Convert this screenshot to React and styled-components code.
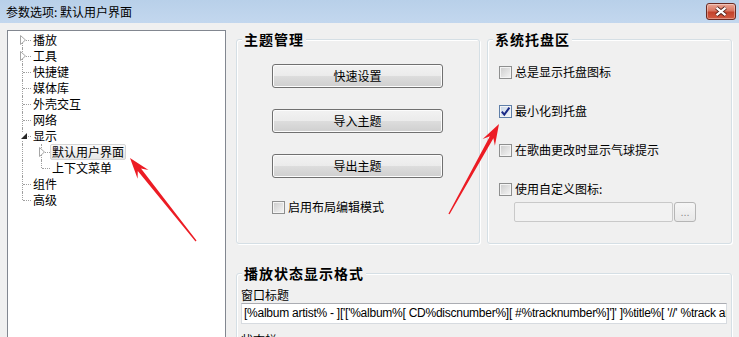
import React from "react";
import styled, { createGlobalStyle } from "styled-components";

const GlobalStyle = createGlobalStyle`
  html, body {
    margin: 0;
    padding: 0;
  }
  body {
    width: 739px;
    height: 337px;
    overflow: hidden;
    background: #f0f0f0;
    font-family: "Noto Sans CJK SC", "Liberation Sans", sans-serif;
    font-size: 12px;
    color: #000;
  }
`;

// Data
const treeItems = [
  { label: "播放", level: 0, toggle: "closed", up: false, down: true },
  { label: "工具", level: 0, toggle: "closed", up: true, down: true },
  { label: "快捷键", level: 0, up: true, down: true },
  { label: "媒体库", level: 0, up: true, down: true },
  { label: "外壳交互", level: 0, up: true, down: true },
  { label: "网络", level: 0, up: true, down: true },
  { label: "显示", level: 0, toggle: "open", up: true, down: true },
  { label: "默认用户界面", level: 1, toggle: "closed", up: true, down: true, selected: true },
  { label: "上下文菜单", level: 1, up: true, down: false },
  { label: "组件", level: 0, up: true, down: true },
  { label: "高级", level: 0, up: true, down: false },
];

const formatString =
  "[%album artist% - ]['['%album%[ CD%discnumber%][ #%tracknumber%]']' ]%title%[ '//' %track artist%]";

const arrowPoints = ([x1, y1], [x2, y2]) => {
  const dx = x2 - x1;
  const dy = y2 - y1;
  const len = Math.hypot(dx, dy);
  const ux = dx / len;
  const uy = dy / len;
  const nx = -uy;
  const ny = ux;
  const head = 21;
  const hw = 7;
  const sw = 2;
  const tw = 0.7;
  const bx = x2 - ux * head;
  const by = y2 - uy * head;
  const jx = x2 - ux * head * 0.72;
  const jy = y2 - uy * head * 0.72;
  const pts = [
    [x1 + nx * tw, y1 + ny * tw],
    [jx + nx * sw, jy + ny * sw],
    [bx + nx * hw, by + ny * hw],
    [x2, y2],
    [bx - nx * hw, by - ny * hw],
    [jx - nx * sw, jy - ny * sw],
    [x1 - nx * tw, y1 - ny * tw],
  ];
  return pts.map((p) => p.map((v) => v.toFixed(1)).join(",")).join(" ");
};

const Expander = ({ open }) =>
  open ? (
    <ExpanderIcon width="8" height="8" viewBox="0 0 8 8" style={{ top: 4 }}>
      <rect x="0" y="0" width="8" height="8" fill="#fff" />
      <polygon points="7,1 7,7 1,7" fill="#262626" />
    </ExpanderIcon>
  ) : (
    <ExpanderIcon width="7" height="10" viewBox="0 0 7 10" style={{ top: 3 }}>
      <polygon points="0.5,0.5 5.5,5 0.5,9.5" fill="#fff" stroke="#a6a6a6" />
    </ExpanderIcon>
  );

const TreeRow = ({ item }) => (
  <Row>
    {item.level > 0 && (
      <Cell>
        <VLine $up $down />
      </Cell>
    )}
    <Cell>
      <VLine $up={item.up} $down={item.down} />
      <HLine />
      {item.toggle && <Expander open={item.toggle === "open"} />}
    </Cell>
    <Label $selected={item.selected}>{item.label}</Label>
  </Row>
);

const Check = ({ checked, label }) => (
  <CheckRow>
    <Box $checked={checked}>
      {checked && (
        <svg width="11" height="11" viewBox="0 0 11 11">
          <path
            d="M1.8 5.6 L4.3 8.6 L9.4 1.6"
            fill="none"
            stroke="#1b2a86"
            strokeWidth="2"
          />
        </svg>
      )}
    </Box>
    <span>{label}</span>
  </CheckRow>
);

const App = () => {
  return (
    <Window>
      <GlobalStyle />
      <TitleBar>
        <Title>参数选项: 默认用户界面</Title>
        <CloseButton>
          <svg width="14" height="11" viewBox="0 0 14 11">
            <path d="M2.5 1.8 L11.5 9.2 M11.5 1.8 L2.5 9.2" stroke="#4a1c16" strokeWidth="4" />
            <path d="M2.5 1.8 L11.5 9.2 M11.5 1.8 L2.5 9.2" stroke="#fff" strokeWidth="2.2" />
          </svg>
        </CloseButton>
      </TitleBar>

      <Client>
        <Tree>
          {treeItems.map((item) => (
            <TreeRow key={item.label} item={item} />
          ))}
        </Tree>

        <Pages>
          <TopRow>
            <Group $w={244} $h={213}>
              <Legend>主题管理</Legend>
              <ThemeBody>
                <Button>快速设置</Button>
                <Button>导入主题</Button>
                <Button>导出主题</Button>
                <Check label="启用布局编辑模式" />
              </ThemeBody>
            </Group>

            <Group $w={245} $h={213}>
              <Legend>系统托盘区</Legend>
              <TrayBody>
                <Check label="总是显示托盘图标" />
                <Check checked label="最小化到托盘" />
                <Check label="在歌曲更改时显示气球提示" />
                <Check label="使用自定义图标:" />
                <PathRow>
                  <PathInput />
                  <BrowseButton>...</BrowseButton>
                </PathRow>
              </TrayBody>
            </Group>
          </TopRow>

          <FormatGroup $w={496} $h={110}>
            <Legend>播放状态显示格式</Legend>
            <FormatBody>
              <FieldLabel>窗口标题</FieldLabel>
              <FormatInput>{formatString}</FormatInput>
              <FieldLabel>状态栏</FieldLabel>
            </FormatBody>
          </FormatGroup>
        </Pages>
      </Client>

      <ArrowLayer width="739" height="337" viewBox="0 0 739 337">
        <polygon points={arrowPoints([196, 241], [130, 158])} fill="#ec1c24" />
        <polygon points={arrowPoints([449, 214], [499, 124])} fill="#ec1c24" />
      </ArrowLayer>
    </Window>
  );
};

const Window = styled.div`
  position: relative;
  width: 739px;
  height: 337px;
  overflow: hidden;
  display: flex;
  flex-direction: column;
  background: #f0f0f0;
`;

const TitleBar = styled.div`
  flex: none;
  height: 23px;
  display: flex;
  align-items: center;
  justify-content: space-between;
  padding: 0 3px 0 6px;
  box-sizing: border-box;
  background: linear-gradient(#b8d0e9, #c3d7ee);
`;

const Title = styled.span`
  font-size: 12px;
  line-height: 16px;
  color: #000;
`;

const CloseButton = styled.div`
  width: 30px;
  height: 17px;
  box-sizing: border-box;
  display: flex;
  align-items: center;
  justify-content: center;
  border: 1px solid #6a2a22;
  border-radius: 3px;
  background: linear-gradient(#eaa796 0%, #d87560 45%, #c2432c 55%, #d35b42 100%);
  box-shadow: inset 0 0 0 1px rgba(255, 255, 255, 0.35);
`;

const Client = styled.div`
  flex: 1;
  min-height: 0;
  display: flex;
  align-items: flex-start;
  padding: 7px 0 0 7px;
`;

const Tree = styled.div`
  flex: none;
  width: 219px;
  height: 330px;
  box-sizing: border-box;
  padding: 1px 0 0 4px;
  background: #fff;
  border: 1px solid #828790;
`;

const Row = styled.div`
  display: flex;
  align-items: center;
  height: 16px;
`;

const Cell = styled.span`
  position: relative;
  flex: none;
  width: 19px;
  height: 16px;
`;

const VLine = styled.span`
  position: absolute;
  left: 10px;
  top: ${(p) => (p.$up ? 0 : 8)}px;
  bottom: ${(p) => (p.$down ? 0 : 8)}px;
  border-left: 1px dotted #a0a0a0;
`;

const HLine = styled.span`
  position: absolute;
  left: 11px;
  top: 8px;
  width: 8px;
  border-top: 1px dotted #a0a0a0;
`;

const ExpanderIcon = styled.svg`
  position: absolute;
  left: 8px;
`;

const Label = styled.span`
  line-height: 14px;
  padding: 0 1px;
  border: 1px solid ${(p) => (p.$selected ? "#d5d5d5" : "transparent")};
  border-radius: 2px;
  background: ${(p) =>
    p.$selected ? "linear-gradient(#fafafa, #e6e6e6)" : "transparent"};
  white-space: nowrap;
`;

const Pages = styled.div`
  flex: none;
  width: 496px;
  margin: 1px 0 0 10px;
`;

const TopRow = styled.div`
  display: flex;
  gap: 7px;
`;

const Group = styled.fieldset`
  margin: 0;
  padding: 0;
  min-width: 0;
  box-sizing: border-box;
  width: ${(p) => p.$w}px;
  height: ${(p) => p.$h}px;
  border: 1px solid #d5dfe5;
  border-radius: 3px;
  box-shadow: inset 1px 1px 0 #fff, 1px 1px 0 #fff;
`;

const FormatGroup = styled(Group)`
  margin-top: 21px;
`;

const Legend = styled.legend`
  margin-left: 5px;
  padding: 0 2px;
  font-size: 14px;
  font-weight: bold;
  line-height: 16px;
  letter-spacing: 1px;
  background: #f0f0f0;
`;

const ThemeBody = styled.div`
  display: flex;
  flex-direction: column;
  align-items: flex-start;
  gap: 21px;
  padding: 17px 0 0 35px;
`;

const Button = styled.div`
  width: 171px;
  height: 24px;
  box-sizing: border-box;
  border: 1px solid #707070;
  border-radius: 3px;
  background: linear-gradient(#f2f2f2 0%, #ebebeb 50%, #dddddd 50%, #cfcfcf 100%);
  box-shadow: inset 0 0 0 1px #fcfcfc;
  font-size: 12px;
  line-height: 22px;
  text-align: center;
`;

const TrayBody = styled.div`
  display: flex;
  flex-direction: column;
  align-items: flex-start;
  gap: 23px;
  padding: 17px 0 0 11px;
`;

const CheckRow = styled.label`
  display: flex;
  align-items: center;
  gap: 3px;
  height: 16px;
  font-size: 12px;
  line-height: 16px;
  white-space: nowrap;
`;

const Box = styled.span`
  flex: none;
  width: 13px;
  height: 13px;
  box-sizing: border-box;
  display: flex;
  align-items: center;
  justify-content: center;
  border: 1px solid ${(p) => (p.$checked ? "#5f7fa8" : "#8e8f8f")};
  background: ${(p) =>
    p.$checked
      ? "linear-gradient(135deg, #c7d6e8, #f4f7fb)"
      : "linear-gradient(135deg, #cbcbcb, #f6f6f6)"};
  box-shadow: inset 0 0 0 1px #f4f4f4;
`;

const PathRow = styled.div`
  display: flex;
  margin: -18px 0 0 15px;
  gap: 1px;
`;

const PathInput = styled.div`
  width: 159px;
  height: 20px;
  box-sizing: border-box;
  border: 1px solid #c9c9c9;
  border-radius: 2px;
  background: #f2f2f2;
`;

const BrowseButton = styled.div`
  width: 22px;
  height: 20px;
  box-sizing: border-box;
  border: 1px solid #b5b5b5;
  border-radius: 3px;
  background: linear-gradient(#f6f6f6, #e8e8e8);
  color: #8d8d8d;
  font-family: "Liberation Sans", sans-serif;
  font-size: 11px;
  line-height: 18px;
  text-align: center;
`;

const FormatBody = styled.div`
  padding: 6px 4px 0 4px;
`;

const FieldLabel = styled.div`
  font-size: 12px;
  line-height: 16px;
  margin-bottom: 0;
  & + div + & {
    margin-top: 8px;
  }
`;

const FormatInput = styled.div`
  width: 486px;
  height: 21px;
  box-sizing: border-box;
  padding: 0 2px;
  border: 1px solid #d7dbe0;
  border-top-color: #abadb3;
  background: #fff;
  font-family: "Liberation Sans", sans-serif;
  font-size: 12px;
  letter-spacing: -0.25px;
  line-height: 19px;
  white-space: nowrap;
  overflow: hidden;
`;

const ArrowLayer = styled.svg`
  position: absolute;
  left: 0;
  top: 0;
  pointer-events: none;
`;

export default App;
